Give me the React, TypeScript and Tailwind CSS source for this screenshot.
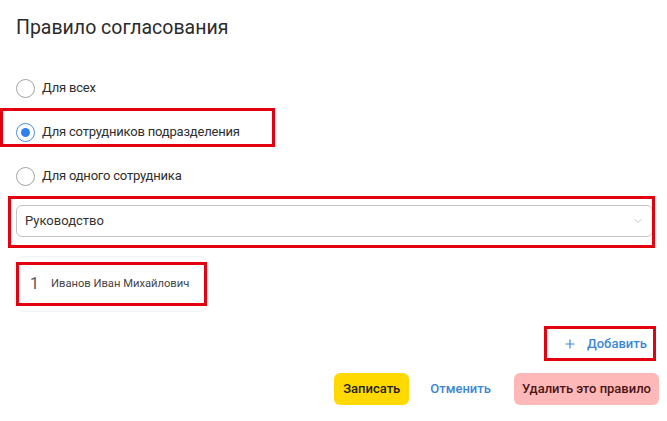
import { ChevronDown, Plus } from "lucide-react";

const options = [
  { id: "all", label: "Для всех", checked: false, marked: false },
  { id: "dept", label: "Для сотрудников подразделения", checked: true, marked: true },
  { id: "one", label: "Для одного сотрудника", checked: false, marked: false }
];

function Radio({ checked }: { checked: boolean }): React.ReactElement {
  return (
    <span
      className={[
        "flex h-[19px] w-[19px] shrink-0 items-center justify-center rounded-full border bg-white",
        checked ? "border-[#4a8fe0]" : "border-[#a3a3a3]"
      ].join(" ")}
    >
      {checked ? <span className="h-[9px] w-[9px] rounded-full bg-[#2f80ed]" /> : null}
    </span>
  );
}

export default function App(): React.ReactElement {
  return (
    <div className="relative h-[421px] w-[667px] overflow-hidden bg-white px-[16px] pt-[14px] font-['Roboto',sans-serif] text-[#333333]">
      <h1 className="h-[28px] text-[19.5px] font-normal leading-[28px] text-[#2b2b2b]">Правило согласования</h1>

      <div className="mt-[24px]">
        {options.map((option) => (
          <label className="relative flex h-[44px] items-center gap-[7px] text-[13px] tracking-[-0.2px] text-[#2e2e2e]" key={option.id}>
            <Radio checked={option.checked} />
            <span>{option.label}</span>
            {option.marked ? (
              <span className="pointer-events-none absolute left-[-16px] top-[-2px] h-[39px] w-[275px] border-[3px] border-[#e3000f]" />
            ) : null}
          </label>
        ))}
      </div>

      <div className="relative mt-[7px] mr-[-2px] flex h-[32px] items-center justify-between rounded-[6px] border border-[#c4c4c4] pl-[8px] pr-[8px] text-[13px]">
        <span>Руководство</span>
        <ChevronDown className="h-[12px] w-[12px] text-[#b5b5b5]" strokeWidth={1.5} />
        <span className="pointer-events-none absolute bottom-[-12px] left-[-9px] right-[-3px] top-[-10px] border-[3px] border-[#e3000f]" />
      </div>

      <div className="relative ml-[-2px] mt-[19px] flex h-[56px] w-[194px] items-center rounded-[10px] border border-[#f3f3f3] pl-[15px]">
        <span className="w-[21px] text-[16px] text-[#555555]">1</span>
        <span className="text-[11.2px] text-[#444444]">Иванов Иван Михайлович</span>
        <span className="pointer-events-none absolute left-[1px] top-[5px] h-[44px] w-[191px] border-[3px] border-[#e3000f]" />
      </div>

      <div className="mt-[14px] flex justify-end">
        <button className="relative mr-[-5px] flex h-[35px] w-[112px] items-center gap-[10px] pl-[19px] text-[13px] font-medium text-[#3d86d6]" type="button">
          <Plus className="h-[14px] w-[14px]" strokeWidth={2} />
          Добавить
          <span className="pointer-events-none absolute inset-0 border-[3px] border-[#e3000f]" />
        </button>
      </div>

      <div className="mt-[12px] mr-[-8px] flex items-center justify-end">
        <button className="h-[32px] rounded-[6px] bg-[#ffd900] px-[9px] text-[13px] font-medium text-[#222222]" type="button">
          Записать
        </button>
        <button className="ml-[9px] h-[32px] px-[12px] text-[13px] font-medium text-[#3d86d6]" type="button">
          Отменить
        </button>
        <button className="ml-[11px] h-[32px] rounded-[6px] bg-[#ffb8b8] px-[8px] text-[13px] font-medium text-[#4a1515]" type="button">
          Удалить это правило
        </button>
      </div>
    </div>
  );
}
